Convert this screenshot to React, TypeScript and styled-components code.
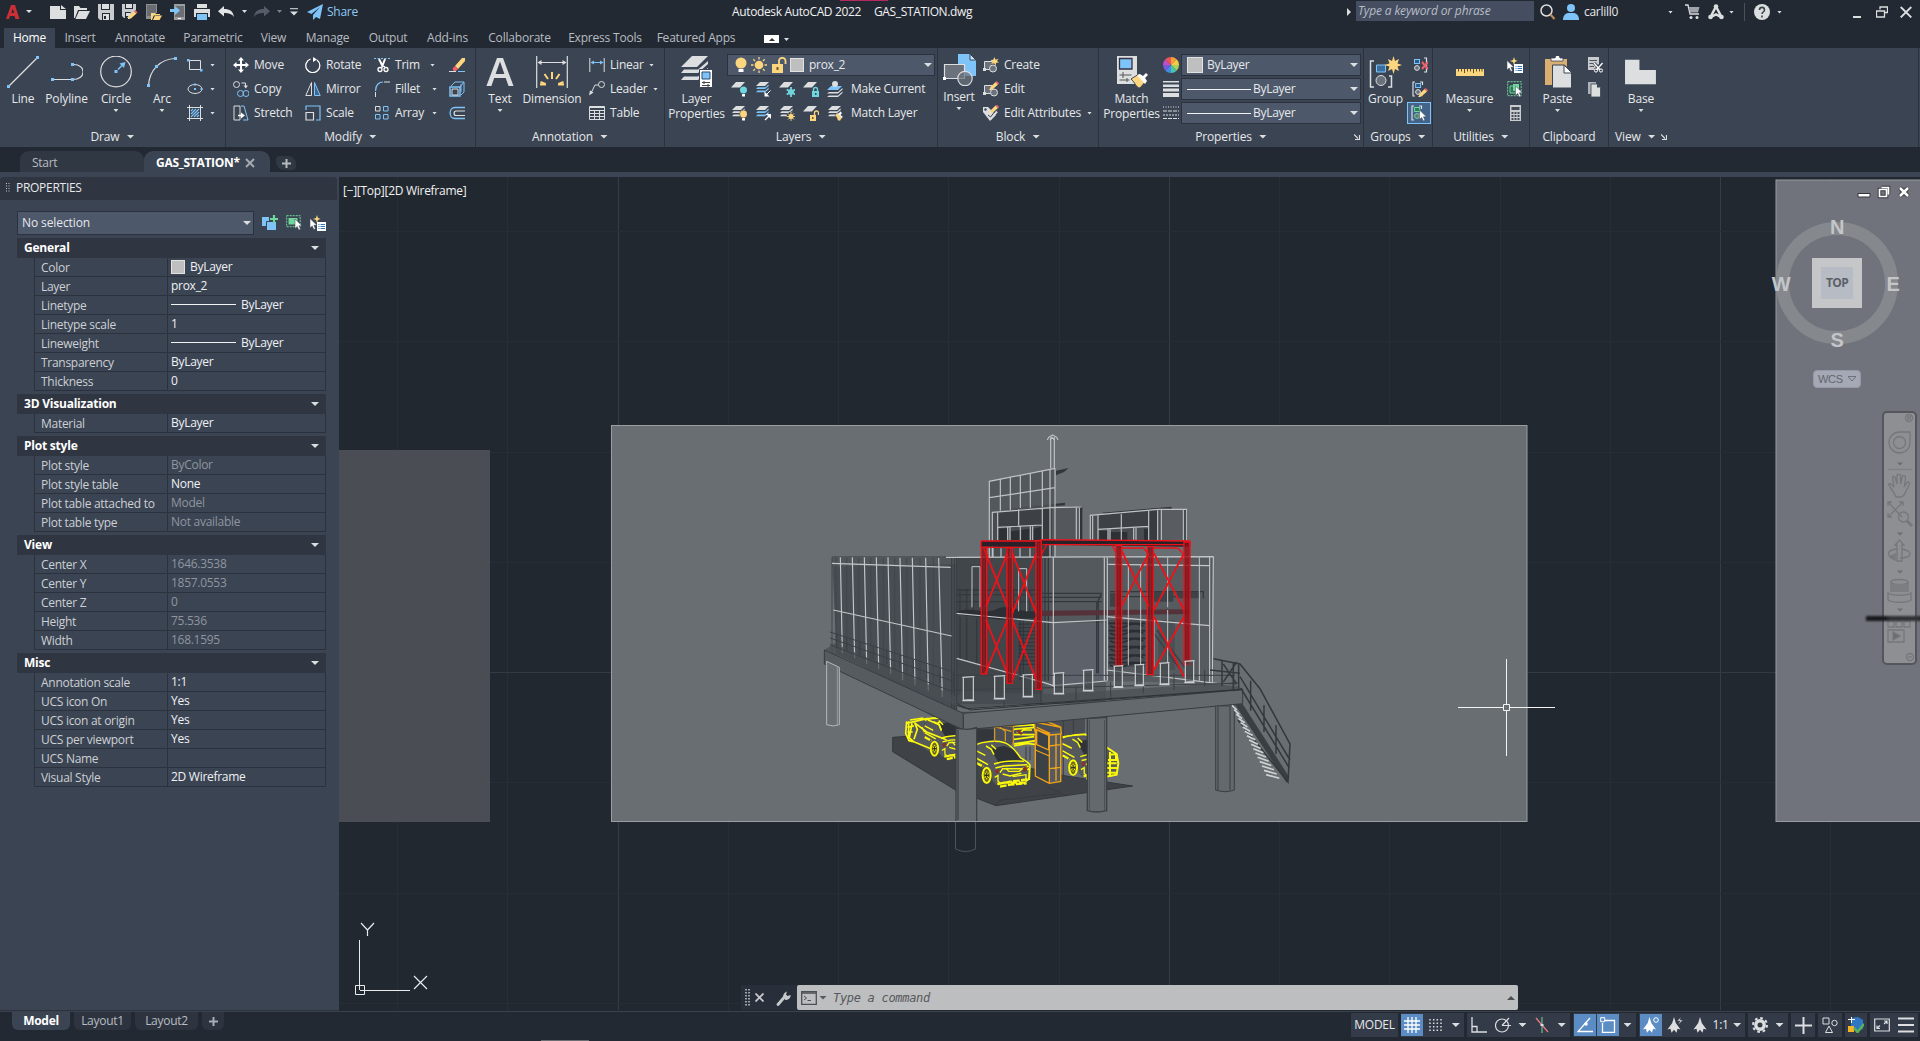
import React from "react";
import styled, { createGlobalStyle, css } from "styled-components";

const c = {
  chrome: "#222933",
  panel: "#3b4453",
  header: "#2f3541",
  edge: "#2b323e",
  field: "#4d586b",
  text: "#e6e8ea",
  dim: "#b9bcc1",
  canvas: "#212830",
  w: "#dcdee0",
  b: "#7fc4f8",
  y: "#fcd57f",
  g: "#6fd79b",
  r: "#f0606a",
  t: "#6fd6e0",
};

const Global = createGlobalStyle`
  * { box-sizing: border-box; }
  html, body { margin: 0; padding: 0; background: ${c.chrome}; overflow: hidden; }
  body { font-family: "Open Sans", "Noto Sans", sans-serif; font-size: 12px; font-stretch: 88%; letter-spacing: -.28px; color: ${c.text}; line-height: 16px; white-space: nowrap; }
  svg { display: block; flex: none; }
`;

/* ---------- shared parts ---------- */
const Svg = ({ s = 16, v = s, children, w, h }: { s?: number; v?: number; w?: number; h?: number; children?: React.ReactNode }) => (
  <svg width={w ?? s} height={h ?? s} viewBox={`0 0 ${w ?? v} ${h ?? v}`} fill="none" stroke="none">{children}</svg>
);

const Caret = styled.i<{ $s?: number; $c?: string }>`
  flex: none;
  display: block;
  width: ${p => (p.$s ?? 3) * 2}px;
  height: ${p => Math.ceil(p.$s ?? 3)}px;
  background: ${p => p.$c ?? c.w};
  clip-path: polygon(0 0, 100% 0, 50% 100%);
`;

/* ---------- icons ---------- */
const Layers3 = ({ blue = false }: { blue?: boolean }) => (
  <g fill={c.w}>
    <path d="M5 1h9l-4 4H1z" />
    <path d="M1 8l1.600-1.700h8l3-3v2L10 8z" fill={blue ? c.b : c.w} />
    <path d="M1 11.300l1.600-1.700h8l3-3v2L10 11.300z" fill={blue ? c.b : c.w} />
  </g>
);
const Sheet = () => <path d="M5 1h9l-5 5.500H0z" fill={c.w} />;
const BracketBox = ({ f = "#2f5b86", s = c.b }: { f?: string; s?: string }) => (
  <g>
    <path d="M3 1H1v14h2" stroke={c.w} strokeWidth="1.200" />
    <rect x="3.600" y="2.500" width="5" height="4" fill={f} stroke={s} />
    <circle cx="6" cy="11" r="2.400" fill="#6c727c" stroke={s === c.b ? c.w : s} />
  </g>
);
const Pencil = ({ x = 0, y = 0 }: { x?: number; y?: number }) => (
  <g transform={`translate(${x} ${y})`}>
    <path d="M0 9l1-3 5-5 2.500 2.500-5.500 5z" fill={c.y} />
    <path d="M6 1l1.200-1 2.400 2.300L8.500 3.500z" fill={c.r} />
    <path d="M0 9l.5-1.500 1 1z" fill="#fff" />
  </g>
);
const Pointer = ({ x = 0, y = 0 }: { x?: number; y?: number }) => (
  <path transform={`translate(${x} ${y})`} d="M0 0v9.500l2.200-2 1.600 3.500 1.700-.8-1.600-3.400H7z" fill="#fff" stroke="#39424f" strokeWidth=".5" />
);
const Dot = ({ p }: { p: number[][] }) => <>{p.map(([x, y], i) => <rect key={i} x={x - 1.5} y={y - 1.5} width="3" height="3" fill={c.b} />)}</>;

const icon: Record<string, React.ReactNode> = {
  newFile: <path d="M0 2h10v4h6v9H0zM11 1l5 4h-5z" fill={c.w} />,
  open: <path d="M0 2h5l1.500 2H13v2H4L1 14H0zM5 7h11l-4 8H1.500z" fill={c.w} />,
  save: <><path d="M0 0h16v16H2l-2-2z" fill="#c9cbce" /><path d="M3 0h9v6H3zM4 9h8v7H4z" fill={c.chrome} /><path d="M4 0h7v5H4zM5 10h6v6H5z" fill={c.w} /><path d="M6 12h2v3H6z" fill={c.chrome} /></>,
  saveAs: <><path d="M0 0h14v6l-7 8H2l-2-2z" fill="#c9cbce" /><path d="M3 0h8v5H3zM3 8h6l-4 6H3z" fill={c.chrome} /><path d="M4 0h6v4H4zM4 9h4v3H4z" fill={c.w} /><Pencil x={6} y={6} /></>,
  openWeb: <><path d="M0 0h11v9H6v6H0z" fill="#8d8f93" /><path d="M1 1h9v11H1z" fill="#696c71" /><path d="M5 9h4l1 1h4v1H8l-2 5H5zM9 11.500h7L13.500 16H7z" fill={c.y} /></>,
  saveWeb: <><path d="M4 0h11v16H4z" fill="#9b9da1" /><path d="M5 2h9v11H5z" fill="#6b6e73" /><path d="M0 5h5V2l5 4.500L5 11V8H0z" fill={c.b} /><path d="M8 14h3v1H8z" fill="#fff" /></>,
  print: <><path d="M3 0h10v4H3zM0 5h16v8h-2V9H2v4H0z" fill={c.w} /><path d="M3 10h10v6H3z" fill={c.b} /></>,
  undo: <path d="M6 2v3c6 0 9 2 10 8-2-3-5-4-10-4v3.500L0 7.200z" fill="#e3e4e6" />,
  redo: <path d="M10 2v3C4 5 1 7 0 13c2-3 5-4 10-4v3.500l6-5.300z" fill="#565d68" />,
  share: <path d="M16 0L0 8l4.500 2L13 3 6 11v5l3-3 4 2z" fill={c.b} />,
  rect: <><path d="M2.500 3.500h11v9h-11z" stroke={c.w} /><rect x="0" y="2" width="2.500" height="2.500" fill={c.b} /><rect x="13" y="12" width="2.500" height="2.500" fill={c.b} /></>,
  ellipse: <><ellipse cx="8" cy="8" rx="7" ry="4.500" stroke={c.w} /><rect x="7" y="7" width="2" height="2" fill={c.b} /><rect x="7" y="2.500" width="2" height="2" fill={c.b} /><rect x="13.500" y="7" width="2" height="2" fill={c.b} /></>,
  hatch: <><path d="M0 2.500h16M0 13.500h16M2.500 0v16M13.500 0v16" stroke={c.w} /><path d="M4 6l2-2M4 9l5-5M4 12l8-8M7 12l5-5M10 12l2-2" stroke={c.b} strokeWidth="1.200" /></>,
  move: <path d="M8 0l3 3.500H9V7h3.500V5L16 8l-3.500 3V9H9v3.500h2L8 16l-3-3.500h2V9H3.500v2L0 8l3.500-3v2H7V3.500H5z" fill="#fff" />,
  rotate: <><path d="M5.500 2A7 7 0 1 0 12 3" stroke="#fff" strokeWidth="1.300" /><path d="M8 5V0l4 2.500z" fill="#fff" /></>,
  trim: <><path d="M0 1.500h16" stroke={c.b} strokeDasharray="2 1.500" /><path d="M5 2l4 8M11 2L8 10" stroke="#fff" strokeWidth="2" /><circle cx="6" cy="12.500" r="2" stroke="#fff" strokeWidth="1.300" /><circle cx="12" cy="12.500" r="2" stroke="#fff" strokeWidth="1.300" /><path d="M7 11l3-2 2 2" stroke="#fff" /></>,
  erase: <><path d="M6 9l7-8 3 0v3l-7 8z" fill={c.y} /><path d="M6 9l3 3-2 2c-2 1-4-1-3-3z" fill={c.r} /><path d="M0 14.500h7" stroke={c.w} /><path d="M9 14.500h7" stroke={c.b} /></>,
  copy: <><circle cx="3.500" cy="3.500" r="3" stroke={c.w} /><circle cx="7.500" cy="12.500" r="3" stroke={c.b} /><circle cx="13" cy="12.500" r="3" stroke={c.b} /><path d="M8.500 2h4v3" stroke={c.w} /><path d="M10.500 4.500h4.500l-2.200 3z" fill={c.w} /></>,
  mirror: <><path d="M6.500 1.500v13H.8z" stroke={c.w} /><path d="M9.500 1.500v13h5.700z" stroke={c.b} fill="#3f688f" /></>,
  fillet: <><path d="M1.500 10C1.500 4 5 1 9 1" stroke={c.b} strokeWidth="1.200" /><path d="M10 1h6M1.500 11v5" stroke={c.w} /></>,
  explode: <><path d="M1 6h10v9H1z" stroke={c.b} strokeWidth="1.500" /><path d="M3 8h6v6H3z" stroke={c.w} /><path d="M2 5l4-4h9v10l-3 3M11 6l4-5M12 3v8" stroke={c.b} /></>,
  stretch: <><path d="M7 1H1v14h6z" stroke={c.w} /><path d="M8 1h3l4 14h-5" stroke={c.b} /><path d="M5 10.500h4" stroke="#fff" strokeWidth="1.400" /><path d="M8 7.500l4 3-4 3z" fill="#fff" /></>,
  scale: <><path d="M1 5V1h14v14h-4" stroke={c.b} strokeWidth="1.200" /><path d="M1 7.500h7.500V15H1z" stroke={c.w} strokeWidth="1.200" /></>,
  array: <><path d="M1.500 1.500h4.500v4.500H1.500z" stroke={c.w} /><path d="M9.500 1.500H14v4.500H9.500zM1.500 9.500H6V14H1.500zM9.500 9.500H14V14H9.500z" stroke={c.b} /></>,
  offset: <><path d="M16 2.500H6c-6.500 0-6.500 11 0 11h10" stroke={c.b} strokeWidth="1.300" /><path d="M16 6H7c-2.500 0-2.500 4.500 0 4.500h9" stroke={c.w} strokeWidth="1.200" /></>,
  linear: <><path d="M.8 1v14M15.200 1v14" stroke={c.w} /><path d="M2 5.500h12" stroke={c.b} /><path d="M1.500 5.500L5 3.500v4zM14.500 5.500L11 3.500v4z" fill={c.b} /></>,
  leader: <><circle cx="12.500" cy="3.500" r="3" stroke={c.w} /><path d="M9.500 4H6L2 12" stroke={c.w} /><path d="M0 14.500l1-5 3.500 2z" fill={c.w} /></>,
  table: <path d="M.5 1.500h15v13H.5zM.5 2.500h15M.5 5.500h15M.5 8.500h15M.5 11.500h15M5.500 5v9M10.500 5v9" stroke={c.w} />,
  bulb: <><circle cx="8" cy="6" r="5.500" fill={c.y} /><path d="M5.500 12h5v3h-5z" fill="#fff" /></>,
  sun: <><circle cx="8" cy="8" r="4.300" fill={c.y} /><path d="M8 0v2.500M8 13.500V16M0 8h2.500M13.500 8H16M2.300 2.300l1.800 1.800M11.900 11.900l1.800 1.800M13.700 2.300l-1.800 1.800M4.100 11.900l-1.800 1.800" stroke={c.y} strokeWidth="1.300" /></>,
  unlock: <><path d="M1 7h11v9H1z" fill={c.y} /><path d="M8 8V4a3 3 0 0 1 6.500 0v3" stroke={c.y} strokeWidth="1.800" /><path d="M5.500 10h2v3h-2z" fill="#6d5a2c" /></>,
  layOff: <><Sheet /><circle cx="12.500" cy="9" r="3.500" fill={c.t} /><path d="M11 13h3v2.500h-3z" fill="#fff" /></>,
  layIso: <><Layers3 blue /><path d="M15.500 9.500l-4 4" stroke="#fff" /><path d="M9.500 15.500v-5l5 5z" fill="#fff" /></>,
  layFrz: <><Sheet /><path d="M12 6v10M7.700 8.500l8.600 5M16.300 8.500l-8.600 5" stroke={c.t} strokeWidth="1.800" /><circle cx="12" cy="11" r="2.600" stroke={c.t} /></>,
  layLock: <><Sheet /><path d="M9 10h7v6H9z" fill={c.t} /><path d="M10.500 10V8.500a2 2 0 0 1 4 0V10" stroke={c.t} strokeWidth="1.400" /><path d="M12 12h1.500v2H12z" fill="#2d5560" /></>,
  layOn: <><Layers3 /><circle cx="12.500" cy="9" r="4" fill={c.y} stroke={c.panel} strokeWidth=".6" /><path d="M11 13h3v2.500h-3z" fill="#fff" /></>,
  layUniso: <><Layers3 blue /><path d="M10 15l4-4" stroke="#fff" strokeWidth="1.300" /><path d="M11 9h5v5z" fill="#fff" /></>,
  layThaw: <><Layers3 /><circle cx="12" cy="11.500" r="4.500" fill={c.panel} /><circle cx="12" cy="11.500" r="2.500" fill={c.y} /><path d="M12 7v9M7.500 11.500h9M9 8.500l6 6M15 8.500l-6 6" stroke={c.y} strokeWidth=".9" /></>,
  layUnlock: <><Sheet /><path d="M7 10h6v6H7z" fill={c.y} /><path d="M11.500 10V8a2 2 0 0 1 4 0v2" stroke={c.y} strokeWidth="1.300" /><path d="M9 12h1.500v2H9z" fill="#6d5a2c" /></>,
  makeCur: <><path d="M4 5h11l-4 4H0z" fill={c.b} /><circle cx="8" cy="3" r="3" fill={c.w} /><path d="M0 12.500L2 11h9l4.500-4v1.500L11 12.500zM0 16l2-1.500h9l4.500-4V12L11 16z" fill={c.w} /></>,
  matchLay: <><Layers3 /><path d="M8 10l2-2 5 5-2 3c-2 0-3-1-3-3z" fill={c.y} stroke={c.panel} strokeWidth=".5" /><path d="M10 8l2 .5 1.500-2L15 8l-1.500 2L16 12l-1.500 1z" fill="#fff" /></>,
  create: <><path d="M9.500 4.500h-8v8h6" stroke={c.w} fill="#6c727c" /><rect x="0" y="11" width="3" height="3" fill={c.w} /><circle cx="10" cy="11.500" r="3.500" fill="#6c727c" stroke={c.w} /><path d="M11.500 0l1 2.700L15.500 1.700 14 4l2 1.500-2.800.3-.7 2.900-1.300-2.400L8.300 7 9.500 4.700 7.500 3l2.700-.2z" fill={c.y} /></>,
  edit: <><path d="M9.500 4.500h-8v8h6" stroke={c.w} fill="#6c727c" /><rect x="0" y="11" width="3" height="3" fill={c.w} /><circle cx="11" cy="11.500" r="3.500" fill="#6c727c" stroke={c.w} /><Pencil x={6.5} y={0} /></>,
  editAttr: <><path d="M0 2h5l8 8-6 6-7-9z" fill={c.w} /><circle cx="2.500" cy="4.500" r="1.200" fill={c.panel} /><path d="M6 12l2 1.500 6-7" stroke={c.w} strokeWidth="2" /><path d="M5 10l2.500 2 4-5" stroke={c.panel} strokeWidth="1" /><Pencil x={6.5} y={-.5} /></>,
  wheel: <g>{["#f6a03a", "#f7cb45", "#a4d35c", "#4ec3a5", "#3f8de8", "#7a57dd", "#c14fc4", "#ef5458"].map((f, i) => {
    const a = (i * 45 - 90) * Math.PI / 180, b = a + Math.PI / 4;
    return <path key={i} fill={f} d={`M8 8L${8 + 8 * Math.cos(a)} ${8 + 8 * Math.sin(a)}A8 8 0 0 1 ${8 + 8 * Math.cos(b)} ${8 + 8 * Math.sin(b)}Z`} />;
  })}</g>,
  weight: <path d="M0 0h16v1.500H0zM0 3.500h16v2.500H0zM0 7.500h16v3H0zM0 12h16v4H0z" fill={c.w} />,
  ltype: <><path d="M0 2h16" stroke={c.w} strokeDasharray="1 1.500" /><path d="M0 6h16M0 13.500h16" stroke={c.w} strokeDasharray="4 1" /><path d="M0 10h16" stroke={c.w} strokeDasharray="2 1" /></>,
  ungroup: <><path d="M12 1h2.500v14H12" stroke={c.w} strokeWidth="1.200" /><rect x="2.500" y="2.500" width="5" height="4" fill="#2f5b86" stroke={c.b} /><circle cx="5" cy="11" r="2.400" fill="#6c727c" stroke={c.w} /><path d="M10 5l6 7M16 5l-6 7" stroke={c.r} strokeWidth="2" /></>,
  groupEdit: <><BracketBox /><path d="M8 1h2.500v3" stroke={c.w} strokeWidth="1.200" /><Pencil x={6.5} y={7} /></>,
  groupSel: <><BracketBox f="#2d7a5f" s={c.g} /><path d="M8 1h2.500v3" stroke={c.w} strokeWidth="1.200" /><Pointer x={8.5} y={5} /></>,
  quick: <><Pointer x={0} y={3.5} /><path d="M7 0l1 3 2.500.8L8 5 7 8 6 5 3 4l3-1z" fill={c.y} /><path d="M7 7h9v9H7z" fill="#fff" /><path d="M8.500 9.500h1M8.500 11.500h1M8.500 13.500h1M10.500 9.500H15M10.500 11.500H15M10.500 13.500H15" stroke="#3677b5" /></>,
  selAll: <><path d="M.7.700h13.500v14H.700z" stroke={c.g} strokeDasharray="2 1" /><path d="M3 5h6v7H3z" fill="#2e7355" stroke={c.g} /><path d="M6 3h6v7H6z" fill={c.g} /><Pointer x={8.5} y={5} /></>,
  selObj: <><path d="M.7.700h13.500v11H.700z" stroke={c.g} strokeDasharray="2 1" /><path d="M2.500 3h9v6.500h-9z" fill={c.g} /><Pointer x={9} y={4} /></>,
  pickAdd: <><path d="M0 2h7v9H0zM5 7h9v8H5z" fill={c.b} /><path d="M4.500 11V6.500h6" stroke={c.panel} /><path d="M12 0v8M8 4h8" stroke={c.g} strokeWidth="2.200" /></>,
  calc: <><path d="M3 0h11v16H3z" fill="#c9cbce" /><path d="M4.500 2h8v3h-8z" fill="#444c59" /><path d="M4.500 7h2v2h-2zM7.500 7h2v2h-2zM10.500 7h2v2h-2zM4.500 10h2v2h-2zM7.500 10h2v2h-2zM10.500 10h2v2h-2zM4.500 13h2v2h-2zM7.500 13h2v2h-2zM10.500 13h2v2h-2z" fill="#444c59" /></>,
  cut: <><path d="M1 0h11v13H1z" fill="#c9cbce" /><path d="M2.500 3.500H10M2.500 6.500H7M2.500 9.500H7" stroke="#4c5461" strokeWidth="1.200" /><path d="M7 6l7 7M15 6l-7 7" stroke="#39424f" strokeWidth="3" /><path d="M7 6l6 7M15.500 6l-6 7" stroke="#fff" strokeWidth="1.300" /><circle cx="9" cy="13.500" r="1.600" stroke="#fff" /><circle cx="14" cy="13.500" r="1.600" stroke="#fff" /></>,
  copyClip: <><path d="M1 1h8v12H1z" fill="#aeb1b5" /><path d="M4 3h6l3.500 3.500V16H4z" fill={c.w} stroke={c.panel} strokeWidth=".8" /><path d="M10 3v3.500h3.500z" fill={c.panel} /></>,
};

const big: Record<string, React.ReactNode> = {
  line: <><path d="M1.500 30.500L30 2" stroke={c.w} strokeWidth="1.200" /><Dot p={[[1.5, 30.5], [30.5, 1.5]]} /></>,
  polyline: <><path d="M1.500 23.500h20M21.500 23.500c14 0 14-15 1-15" stroke={c.w} strokeWidth="1.200" /><Dot p={[[1.5, 23.5], [21.5, 23.5], [21.5, 8.5]]} /></>,
  circle: <><circle cx="16" cy="15.500" r="15.300" stroke={c.w} strokeWidth="1.200" /><path d="M18 13.500l4-4" stroke={c.b} strokeWidth="1.500" /><path d="M25.500 6l-1.500 6-4.500-4.500z" fill={c.b} /><Dot p={[[16, 15.5]]} /></>,
  arc: <><path d="M2.500 29.500C3.500 14 14 3 29.500 2.500" stroke={c.w} strokeWidth="1.200" /><Dot p={[[2.5, 29.5], [10.5, 10.5], [29.5, 2.5]]} /></>,
  text: <path fillRule="evenodd" d="M13 2h6l10.500 28h-5l-2.800-8H10.200l-2.800 8h-5zM11.600 18h8.800L16 5.500z" fill={c.w} />,
  dimension: <><path d="M.7 0v32M31.300 0v32M2 6.500h28" stroke={c.w} strokeWidth="1.200" /><path d="M1.500 6.500l4-2.500v5zM30.500 6.500l-4-2.500v5z" fill={c.w} /><path d="M16 16v7M8.500 18l3.500 5M23.500 18L20 23M4.500 26l5 2M27.500 26l-5 2M4 28.500h6M28 28.500h-6" stroke={c.y} strokeWidth="2" /></>,
  layerProps: <><path d="M12 0h16L17 11H1z" fill={c.w} /><path d="M1 17l3-3.500h14L28 5v3l-10 9zM1 24l3-3.500h14L28 12v3l-10 9z" fill={c.w} /><path d="M19.500 13.500h13v18h-13z" fill="#fff" stroke={c.panel} /><path d="M22 16h8v7h-8z" fill={c.b} stroke="#2e4d6d" /><path d="M22 26.500h8M22 29.500h8M24 25v3M28 28v3" stroke="#444" /></>,
  insert: <><path d="M15 0h12l6 6v16H15z" fill={c.b} /><path d="M27 0v6h6z" fill="#c9e6fb" stroke={c.panel} /><path d="M1.500 10.500h20v14h-20z" fill="#6c727c" stroke={c.w} strokeWidth="1.200" /><rect x="0" y="23" width="3" height="3" fill="#fff" /><circle cx="22" cy="24.500" r="7.200" fill="#6c727cbb" stroke={c.w} strokeWidth="1.200" /></>,
  match: <><path d="M1 0h20v28H1z" fill={c.w} /><path d="M3.500 2.500h12.500v10.500H3.500z" fill={c.b} stroke="#334" strokeWidth="1.300" /><path d="M3.500 19h12M3.500 24h10M7 16v6M11 22v4" stroke="#555" /><path d="M15 23l8-5 7 7-6 7c-4 0-5-6-9-9z" fill={c.y} stroke={c.panel} /><path d="M21 19l3-1 3 2 3-3 2 2-3 3 2 3-2 3z" fill="#fff" /></>,
  group: <><path d="M5 5H1.500v26H5M20 20h2.500v11H19" stroke={c.w} strokeWidth="1.500" /><path d="M7.500 9h9v7h-9z" fill="#3d6d9e" stroke={c.b} /><circle cx="12" cy="24.500" r="5" fill="#6c727c" stroke={c.w} /><path d="M24.500 0l1.500 5 4-2-1.500 4.500L33 9l-4.500 1.500L30 15l-4-2-1.500 5L23 13l-4 2 1.500-4.500L15 9l5.500-1.500L19 3l4 2z" fill={c.y} /></>,
  measure: <><path d="M2 13h28v7H2z" fill={c.y} /><path d="M4.500 13v2.500M7.500 13v2.500M10.500 13v4M13.500 13v2.500M16.500 13v2.500M19.500 13v4M22.500 13v2.500M25.500 13v2.500M28 13v2.500" stroke="#5a4d2c" /></>,
  paste: <><path d="M3 3h22v26H3z" fill="#d8ae72" /><path d="M9 5V2h4l1-2.500h3L18 2h3v3z" fill="#fff" stroke={c.panel} strokeWidth=".8" /><path d="M10.500 9h12l7 7v16h-19z" fill={c.w} stroke={c.panel} /><path d="M22 9v8h8z" fill="#fff" stroke={c.panel} /></>,
  base: <path d="M1 4h14v11h16v15H1z" fill={c.w} transform="translate(-1 0) scale(1.030 .94)" />,
};

/* ---------- title bar ---------- */
const Page = styled.div`width: 1920px; height: 1041px; display: flex; flex-direction: column; position: relative; background: ${c.chrome}; overflow: hidden;`;
const TitleBar = styled.header`height: 28px; display: flex; position: relative; padding-left: 6px;`;
const QuickBar = styled.div`height: 23px; display: flex; align-items: center;`;
const Slot = styled.span<{ $w: number }>`flex: none; width: ${p => p.$w}px; display: flex; align-items: center;`;
const ShareText = styled.span`width: 30px; color: #8fc9f3; font-size: 12px;`;
const DocTitle = styled.div`display: flex; gap: 12px; height: 24px; align-items: center; padding-left: 375px; color: #f0f1f2;`;
const TitlePart = styled.span<{ $w: number }>`width: ${p => p.$w}px; letter-spacing: -.36px;`;
const TopMark = styled.i`position: absolute; left: 840px; top: 0; width: 48px; height: 1px; background: #b3295f;`;
const RightTools = styled.div`margin-left: auto; display: flex; align-items: center; height: 24px; padding-right: 8px;`;
const Search = styled.div`width: 178px; height: 20px; margin: 0 6px 3px 5px; padding-left: 2px; background: #454e60; color: #b7bcc6; font-style: italic; line-height: 20px; letter-spacing: -.15px;`;
const RightCaret = styled.i`border: 4px solid transparent; border-left-color: ${c.w}; border-right: 0;`;
const Bar = styled.i`width: 1px; height: 18px; background: #4a515c;`;

/* ---------- ribbon ---------- */
const Tabs = styled.nav`height: 20px; display: flex; padding-left: 4px;`;
const Tab = styled.span<{ $w: number; $on?: boolean }>`
  width: ${p => p.$w}px; height: 20px; text-align: center; line-height: 20px; color: ${c.dim}; letter-spacing: -.2px;
  ${p => p.$on && css`background: ${c.panel}; color: #fff;`}
`;
const MinBtn = styled.span`margin: 7px 5px 0 21px; width: 15px; height: 8px; background: #fff; display: grid; place-items: center; i { transform: rotate(180deg); }`;
const MinDrop = styled.span`padding-top: 10px;`;
const Ribbon = styled.section`height: 99px; display: flex; background: ${c.panel};`;
const Panel = styled.div<{ $w: number }>`width: ${p => p.$w}px; flex: none; display: flex; flex-direction: column; border-right: 1px solid ${c.edge};`;
const Body = styled.div`height: 77px; padding: 5px 0 0 1px; display: flex;`;
const PanelName = styled.div<{ $start?: number }>`
  height: 22px; display: flex; gap: 7px; align-items: center; justify-content: center; position: relative; padding-top: 1px; letter-spacing: -.15px;
  ${p => p.$start !== undefined && css`justify-content: flex-start; padding-left: ${p.$start}px;`}
`;
const Launcher = styled.span<{ $x?: number }>`position: absolute; right: ${p => p.$x ?? 5}px; top: 9px;`;
const BigBtn = styled.button<{ $w: number; $n?: number }>`
  width: ${p => p.$w}px; height: 70px; flex: none; border: 0; background: none; padding: ${p => p.$n ? 1 : 3}px 0 0; color: inherit; font: inherit; font-stretch: inherit; letter-spacing: -.15px;
  display: flex; flex-direction: column; align-items: center; line-height: 15px; white-space: pre; text-align: center;
`;
const BigLabel = styled.span`margin-top: 3px; display: flex; flex-direction: column; align-items: center; gap: 3px;`;
const Col = styled.div<{ $w?: number; $ml?: number }>`display: flex; flex-direction: column; flex: none; width: ${p => p.$w ? p.$w + "px" : "auto"}; margin-left: ${p => p.$ml ?? 0}px;`;
const Row = styled.div<{ $g?: number; $ml?: number }>`height: 24px; display: flex; align-items: center; gap: ${p => p.$g ?? 5}px; padding-left: ${p => p.$ml ?? 0}px;`;
const RowText = styled.span<{ $w?: number }>`width: ${p => p.$w ? p.$w + "px" : "auto"}; letter-spacing: -.2px;`;
const Combo = styled.div<{ $w: number }>`
  width: ${p => p.$w}px; height: 22px; background: ${c.field}; border: 1px solid ${c.edge}; display: flex; align-items: center; padding: 0 2px 0 5px;
  & > i:last-child { margin-left: auto; }
`;
const Swatch = styled.i<{ $s?: number }>`width: ${p => p.$s ?? 16}px; height: ${p => p.$s ?? 16}px; background: #bfbfc0; border: 1px solid #e2e2e2; flex: none;`;
const Rule = styled.i<{ $w: number }>`width: ${p => p.$w}px; height: 1px; background: #f2f2f2; flex: none;`;
const Toggle = styled.span`width: 24px; height: 22px; margin-left: -5px; display: grid; place-items: center; background: #42638a; border: 1px solid ${c.b};`;

const Big = ({ i, label, w, drop, n, h }: { i: string; label: string; w: number; drop?: boolean; n?: number; h?: number }) => (
  <BigBtn $w={w} $n={n}><Svg s={32} w={h ?? 32} h={32}>{big[i]}</Svg><BigLabel>{label}{drop && <Caret $s={2.5} />}</BigLabel></BigBtn>
);
const Ic = ({ n }: { n: string }) => <Svg>{icon[n]}</Svg>;
const Name = ({ children, caret = true, start, launch }: { children: string; caret?: boolean; start?: number; launch?: number }) => (
  <PanelName $start={start}>{children}{caret && <Caret $s={4} />}{launch !== undefined && <Launcher $x={launch}><Svg s={6}><path d="M0 .5L4 4.500M5.500 1v4.500H1" stroke={c.w} strokeWidth="1.200" /></Svg></Launcher>}</PanelName>
);
const Small = ({ i, t, w, drop }: { i: string; t?: string; w?: number; drop?: boolean }) => (
  <Row><Ic n={i} />{t && <RowText $w={w}>{t}</RowText>}{drop && <Caret $s={2.5} />}</Row>
);

const RibbonBar = () => (
  <Ribbon>
    <Panel $w={226}>
      <Body>
        <Big i="line" label="Line" w={44} /><Big i="polyline" label="Polyline" w={43} /><Big i="circle" label="Circle" w={56} drop /><Big i="arc" label="Arc" w={36} drop />
        <Col $ml={7}>{["rect", "ellipse", "hatch"].map(n => <Row key={n} $g={7}><Ic n={n} /><Caret $s={2.5} /></Row>)}</Col>
      </Body>
      <Name>Draw</Name>
    </Panel>
    <Panel $w={250}>
      <Body>
        <Col $w={72} $ml={6}><Small i="move" t="Move" /><Small i="copy" t="Copy" /><Small i="stretch" t="Stretch" /></Col>
        <Col $w={69}><Small i="rotate" t="Rotate" /><Small i="mirror" t="Mirror" /><Small i="scale" t="Scale" /></Col>
        <Col $w={75}><Small i="trim" t="Trim" w={30} drop /><Small i="fillet" t="Fillet" w={32} drop /><Small i="array" t="Array" w={32} drop /></Col>
        <Col><Small i="erase" /><Small i="explode" /><Small i="offset" /></Col>
      </Body>
      <Name>Modify</Name>
    </Panel>
    <Panel $w={189}>
      <Body>
        <Big i="text" label="Text" w={46} drop /><Big i="dimension" label="Dimension" w={58} />
        <Col $ml={8}><Small i="linear" t="Linear" w={34} drop /><Small i="leader" t="Leader" w={38} drop /><Small i="table" t="Table" /></Col>
      </Body>
      <Name>Annotation</Name>
    </Panel>
    <Panel $w={273}>
      <Body>
        <Big i="layerProps" label={"Layer\nProperties"} w={61} h={33} />
        <Col>
          <Row><Combo $w={208}>
            <Slot $w={18}><Ic n="bulb" /></Slot><Slot $w={20}><Ic n="sun" /></Slot><Slot $w={19}><Ic n="unlock" /></Slot><Slot $w={19}><Swatch $s={14} /></Slot>prox_2<Caret $s={4} />
          </Combo></Row>
          <Row $g={8} $ml={4}><Ic n="layOff" /><Ic n="layIso" /><Ic n="layFrz" /><Ic n="layLock" /><Ic n="makeCur" /><RowText>Make Current</RowText></Row>
          <Row $g={8} $ml={4}><Ic n="layOn" /><Ic n="layUniso" /><Ic n="layThaw" /><Ic n="layUnlock" /><Ic n="matchLay" /><RowText>Match Layer</RowText></Row>
        </Col>
      </Body>
      <Name>Layers</Name>
    </Panel>
    <Panel $w={161}>
      <Body>
        <Big i="insert" label="Insert" w={40} drop n={1} h={33} />
        <Col $ml={4}><Small i="create" t="Create" /><Small i="edit" t="Edit" /><Small i="editAttr" t="Edit Attributes" w={78} drop /></Col>
      </Body>
      <Name>Block</Name>
    </Panel>
    <Panel $w={265}>
      <Body>
        <Big i="match" label={"Match\nProperties"} w={63} />
        <Col $w={18}><Row><Ic n="wheel" /></Row><Row><Ic n="weight" /></Row><Row><Ic n="ltype" /></Row></Col>
        <Col>
          <Row><Combo $w={180}><Slot $w={20}><Swatch /></Slot>ByLayer<Caret $s={4} /></Combo></Row>
          <Row><Combo $w={180}><Slot $w={66}><Rule $w={64} /></Slot>ByLayer<Caret $s={4} /></Combo></Row>
          <Row><Combo $w={180}><Slot $w={66}><Rule $w={64} /></Slot>ByLayer<Caret $s={4} /></Combo></Row>
        </Col>
      </Body>
      <Name launch={3}>Properties</Name>
    </Panel>
    <Panel $w={69}>
      <Body>
        <Big i="group" label="Group" w={41} h={33} />
        <Col $ml={6}><Small i="ungroup" /><Small i="groupEdit" /><Row><Toggle><Ic n="groupSel" /></Toggle></Row></Col>
      </Body>
      <Name>Groups</Name>
    </Panel>
    <Panel $w={97}>
      <Body>
        <Big i="measure" label="Measure" w={71} drop />
        <Col $ml={2}><Small i="quick" /><Small i="selAll" /><Small i="calc" /></Col>
      </Body>
      <Name>Utilities</Name>
    </Panel>
    <Panel $w={79}>
      <Body>
        <Big i="paste" label="Paste" w={53} drop />
        <Col $ml={3}><Small i="cut" /><Small i="copyClip" /></Col>
      </Body>
      <Name caret={false}>Clipboard</Name>
    </Panel>
    <Panel $w={310}>
      <Body><Big i="base" label="Base" w={62} drop /></Body>
      <Name start={6} launch={251}>View</Name>
    </Panel>
  </Ribbon>
);

/* ---------- file tabs ---------- */
const FileTabs = styled.div`height: 26px; display: flex; align-items: flex-end; padding-left: 20px; border-bottom: 1px solid ${c.panel};`;
const FileTab = styled.div<{ $w: number; $on?: boolean; $small?: boolean }>`
  width: ${p => p.$w}px; height: ${p => p.$small ? 14 : 21}px; margin-bottom: ${p => p.$small ? 2 : 0}px; margin-left: ${p => p.$small ? 6 : 0}px; display: flex; align-items: center; padding: 2px 12px 0; gap: 8px;
  color: ${p => p.$on ? "#fff" : c.dim}; font-weight: ${p => p.$on ? 700 : 400}; background: ${p => p.$on ? c.panel : "#303844"};
  border-radius: ${p => p.$small ? "4px 8px 4px 8px" : "9px 9px 0 0"};
  ${p => p.$small && css`padding: 0; justify-content: center;`}
`;
const FileName = styled.span<{ $w?: number }>`width: ${p => p.$w ? p.$w + "px" : "auto"};`;

/* ---------- properties palette ---------- */
const Main = styled.main`height: 838px; display: flex; border-top: 4px solid ${c.panel};`;
const Palette = styled.aside`width: 339px; flex: none; background: ${c.panel}; border-bottom: 1px solid #2b323d;`;
const PaletteHead = styled.div`width: 337px; height: 23px; background: ${c.header}; border-radius: 4px 4px 0 0; display: flex; align-items: center; gap: 6px; padding: 0 0 2px 6px; line-height: 20px;`;
const Pick = styled.div`display: flex; align-items: center; height: 24px; margin: 11px 0 3px 17px; gap: 8px;`;
const PickCombo = styled(Combo)`height: 24px; padding-left: 4px; letter-spacing: -.1px;`;
const Section = styled.div`width: 309px; margin: 0 0 3px 17px;`;
const SectionHead = styled.div`height: 20px; background: ${c.header}; display: flex; align-items: center; justify-content: space-between; padding: 0 7px; font-weight: 700; color: #fff; letter-spacing: -.22px;`;
const Prop = styled.div`height: 19px; margin-left: 17px; display: grid; grid-template-columns: 133px 1fr; border: 1px solid ${c.edge}; border-top: 0;`;
const Key = styled.span`padding: 1px 0 0 6px; line-height: 18px; color: #cdd0d4; border-right: 1px solid ${c.edge};`;
const Val = styled.span<{ $off?: boolean; $num?: boolean }>`padding-left: 3px; display: flex; align-items: center; height: 17px; gap: 5px; color: ${p => p.$off ? "#8f959f" : "#f0f1f3"};`;

type P = [string, string, ("sw" | "ln" | "off")?];
const sections: [string, P[]][] = [
  ["General", [["Color", "ByLayer", "sw"], ["Layer", "prox_2"], ["Linetype", "ByLayer", "ln"], ["Linetype scale", "1"], ["Lineweight", "ByLayer", "ln"], ["Transparency", "ByLayer"], ["Thickness", "0"]]],
  ["3D Visualization", [["Material", "ByLayer"]]],
  ["Plot style", [["Plot style", "ByColor", "off"], ["Plot style table", "None"], ["Plot table attached to", "Model", "off"], ["Plot table type", "Not available", "off"]]],
  ["View", [["Center X", "1646.3538", "off"], ["Center Y", "1857.0553", "off"], ["Center Z", "0", "off"], ["Height", "75.536", "off"], ["Width", "168.1595", "off"]]],
  ["Misc", [["Annotation scale", "1:1"], ["UCS icon On", "Yes"], ["UCS icon at origin", "Yes"], ["UCS per viewport", "Yes"], ["UCS Name", ""], ["Visual Style", "2D Wireframe"]]],
];

const PropertiesPalette = () => (
  <Palette>
    <PaletteHead><Svg s={4} w={4} h={10}><path d="M.5 0v10M3 0v10" stroke="#c5c8cc" strokeDasharray="1 1.500" /></Svg>PROPERTIES</PaletteHead>
    <Pick><PickCombo $w={237}>No selection<Caret $s={4} /></PickCombo><Ic n="pickAdd" /><Ic n="selObj" /><Ic n="quick" /></Pick>
    {sections.map(([name, rows]) => (
      <Section key={name}>
        <SectionHead>{name}<Caret $s={4} /></SectionHead>
        {rows.map(([k, v, kind]) => (
          <Prop key={k}><Key>{k}</Key><Val $off={kind === "off"}>{kind === "sw" && <Swatch $s={14} />}{kind === "ln" && <Rule $w={65} />}{v}</Val></Prop>
        ))}
      </Section>
    ))}
  </Palette>
);

/* ---------- drawing canvas ---------- */
const Viewport = styled.section`flex: 1; position: relative; background: ${c.canvas}; overflow: hidden;`;
const Controls = styled.div`position: absolute; left: 4px; top: 6px; color: #f2f2f2;`;
const range = (n: number) => Array.from({ length: n }, (_, i) => i);

const YEL = "#fbf90c";
const Car = ({ t }: { t: string }) => (
  <g transform={t} stroke={YEL} strokeWidth="4.500" fill="none">
    <path d="M0 10C22 0 52-4 72 2c24 6 44 26 62 48l26 18 3 12-5 36-14 6-84 6-10-10-4-22L2 60z" fill="#55595b" stroke="none" />
    <path d="M44 20L84 12l34 12 26 34-74 8z" fill="#2f3337" stroke="none" />
    <path d="M0 8C22-2 60-6 86 2c20 8 36 28 48 46 12 8 24 12 28 22l-2 44M0 26l28 14M0 48l36 20M30 12l16 10 8 16M46 8l14 14" />
    <path d="M54 66c22-8 60-10 90-8M58 78l26-6 70-4M72 92l8-12h60l18-8M80 96l22 6 34-8" />
    <path d="M64 126l44-8 48-6M72 134l30-6 50-4M80 122h70M0 62l22 12" strokeWidth="7" strokeDasharray="20 4" />
    <path d="M56 106l10-6v18l10 8M154 84l6-6-2 34-8 6V98l-40 6M90 78l8 10h32l10-10" strokeWidth="4" />
    <ellipse cx="32" cy="100" rx="12" ry="23" strokeWidth="6" fill="#6b6a20" />
    <path d="M26 92l12 16M38 92l-12 16M32 88v24" strokeWidth="3" />
    <path d="M58 84l10-4v14h-9zM140 78l12-6v14l-10 4z" fill="#8b3026" stroke="none" />
    <path d="M32 92v16M26 100h12" stroke="#24272a" strokeWidth="3" />
  </g>
);

const leftRibs = [[121, 412, 127, 700], [157, 412, 164, 715], [193, 412, 200, 732], [229, 412, 236, 747], [264, 412, 272, 762], [300, 413, 308, 780], [337, 413, 345, 795], [377, 413, 385, 812], [416, 414, 427, 831]];
const posts = [[487, 110, 36, 74], [581, 107, 35, 72], [667, 103, 33, 70], [760, 98, 33, 66], [848, 89, 33, 66], [940, 77, 30, 67], [1003, 73, 30, 66], [1078, 68, 31, 68], [1153, 62, 31, 68]];
const steel = [[544, 382, 16, 380], [621, 384, 16, 406], [708, 362, 16, 446], [948, 376, 17, 362], [1042, 380, 18, 384], [1152, 366, 18, 368]];

const Station = () => (
  <>
    {/* paved base, cars and pumps under the deck */}
    <g transform="translate(800 640) scale(.33333)">
      <path d="M278 292l60-4 180 60 280 60 200 30-410 59-120-46-190-116z" fill="#3f4347" stroke="#34383c" strokeWidth="3" />
      <path d="M588 497l10-16 180-20M740 440l60 28" stroke="#33373b" strokeWidth="2" fill="none" />
      <path d="M375 215h480v90H640l-40 60-90-70z" fill="#4b4f53" />
      <path d="M530 268h50v36h-50zM820 235v60M790 240v180M800 290h60M678 320v40M690 320v40" fill="#33373b" stroke="#3a3e42" strokeWidth="3" />
      <path d="M318 252l32-12 60-4 50 20v90l-70-10-60-40z" fill="#55595b" />
      <path d="M372 250l34-8 20 24-40 10zM414 248l50 6v28l-40-8z" fill="#2f3337" />
      <Car t="translate(374 234) scale(.92)" />
      <path d="M320 244l-3 36 10 22 16 4 50 20M326 244v56M336 250l-8 44 14 12M344 248l8 20-10 30M320 250l60-14 60-2M346 250l34 26 60 24M366 262l8 14M384 240l34 14 6 18M420 244l-10 8M322 262l20-4M322 276h16M330 240l40-6" stroke={YEL} strokeWidth="5" fill="none" />
      <Car t="translate(528 306)" />
      <Car t="translate(788 286) scale(.98 .97)" />
      <path d="M788 290l70-8" stroke={YEL} strokeWidth="4" />
      <g stroke={YEL} strokeWidth="5" fill="none"><path d="M642 258l60-4M642 268l64-6M642 284h62M650 276h14l6-6h26M642 298l60-8M642 312l66-10M642 318l40-8 26 4M700 254l10 30" /><path d="M652 272l14 10" stroke="#8b3026" strokeWidth="8" /></g>
      <path d="M916 320l34 22 5 28-5 34-34 6M928 344l20-2v18h-24M920 370h30M920 384h30M920 398h30M930 336v70" stroke={YEL} strokeWidth="6" fill="#5b5f55" />
      <path d="M584 258h60M584 258v48M600 262l16 12v30M640 250v66M584 260l50 14" stroke="#e19b23" strokeWidth="3.500" fill="none" />
      <path d="M706 262l42 14v154l-42-22z" fill="#3c4145" /><path d="M748 276l36-4v150l-36 8z" fill="#565a5e" />
      <path d="M704 246l78 16 2 20-32 3-48-18zM740 244l44 18M706 266v142l42 22 34-6V280M748 284v146M710 270l36 16v44l-36-16zM748 318l34-4M748 386l34-4M706 330l42 18M768 282v140M710 262l40 18" stroke="#f0a318" strokeWidth="4" fill="none" />
    </g>

    {/* upper volumes */}
    <g transform="translate(800 420) scale(.33333)" fill="none">
      <path d="M615 268l180-20v8l-170 14zM905 278l210-18v8l-200 14zM768 152l38-8-14 12-24 10z" fill="#33373b" />
      <path d="M568 184l197-39v267H568z" fill="#4d5257" opacity=".8" />
      <path d="M577 277l178-14v149H577z" fill="#474c51" />
      <path d="M755 262h82v98h-82z" fill="#54585c" /><path d="M835 260h12v100h-12z" fill="#31353a" />
      <path d="M593 275l134-10v50l-134 8z" fill="#3d4146" /><path d="M727 264h28v148h-28z" fill="#373b40" />
      <path d="M596 326l26-2v38h-26zM632 334l28-4v32h-28zM664 330l24-4v36h-24zM700 326l24-6v40h-24z" fill="#2d3136" />
      <path d="M870 286l205-18h88v92H870z" fill="#474c51" />
      <path d="M895 284l150-12v46l-150 10z" fill="#3d4146" /><path d="M1048 270h26v90h-26z" fill="#383c41" /><path d="M1084 270h64v90h-64z" fill="#595d61" />
      <path d="M898 332h26v28h-26zM932 336h50v24h-50zM1032 326h14v34h-14z" fill="#2d3136" />
      <g stroke="#bfc2c4" strokeWidth="3.500">
        <path d="M568 412V184l197-39M568 233l197-30M601 178v94M631 172v98M661 166v98M691 160v104M727 152v110M750 148v264M765 145v267M752 145V52M763 145V52" />
        <path d="M742 60l4-8 12-7 12 7 4 8M750 60l6-8 8 8" />
        <path d="M577 412V277l178-14 90-2M593 360v-84M656 268v48M593 322l134-7M623 322v38M630 322v38M661 320v40M691 318v42M698 318v42M727 264v96M829 262v98M838 262v98M579 385v27M603 385v27M632 385v27M660 385v27M690 385v27" />
        <path d="M871 360v-74l204-18h85v92M878 286v74M894 284v76M894 328l152-9M924 327v33M930 327v33M964 276v84M1001 321v39M1008 321v39M1046 270v90M1073 268v92M1084 268v92M1150 268v92" />
      </g>
    </g>

    {/* main hall walls */}
    <g transform="translate(800 420) scale(.33333)" fill="none">
      <path d="M96 408h374v470L110 702z" fill="#474d52" />
      <path d="M96 408h374v24l-374 8z" fill="#50565a" />
      <path d="M470 412h292v440H470z" fill="#41464b" />
      <path d="M728 412h190v440H728z" fill="#54595d" />
      <path d="M762 608h156v175l-156 14z" fill="#5d626a" />
      <path d="M918 412h322v380l-322-10z" fill="#565b5f" />
      <path d="M926 600h110v140H926z" fill="#474b50" />
      <path d="M1075 600h50v150h-50z" fill="#4b5055" />
      <path d="M96 412v290M108 412v292M140 415v280M176 415v300M212 415v318M250 415v330M284 415v340M320 415v360M360 415v380M400 415v400" stroke="#41464b" strokeWidth="3" />
      <path d="M455 412v460M463 412v464M470 412v466" stroke="#373c41" strokeWidth="3" />
      <path d="M480 590v130M500 590v130M530 594v140M660 600v180M670 600v180M735 412v370M745 412v370" stroke="#33383d" strokeWidth="4" />
      {range(12).map(i => <path key={i} d={`M655 ${612 + i * 11}h50`} stroke="#2f3338" strokeWidth="3" />)}
      <path d="M470 510h250M470 524h250M470 545h250M480 506v70M500 506v70M520 506v70M640 510v70M660 510v70M690 510v70M725 520h180M725 532h180M725 545h180M905 520l-15 30v210M895 540v220M930 515h280v20M930 530h270" stroke="#34393e" strokeWidth="4" />
      <path d="M930 520h30v40h-30zM1060 515h60v30h-60zM1130 515h70v20h-70z" fill="#3d4247" />
      <path d="M470 575c40-16 90 10 120-8s80 14 120 6v22l-110 4-130-16z" fill="#2c2f34" />
      <path d="M725 572l440-4v14l-440 6z" fill="#55323a" />
      {[610, 632, 655, 680, 705, 728].map(y => <path key={y} d={`M926 ${y}h110M930 ${y + 8}q25 12 50 0t50 0`} stroke="#2a2e33" strokeWidth="5" />)}
      <path d="M1070 630l90 120M1062 640l80 110" stroke="#3a3f44" strokeWidth="4" />
      <g stroke="#c3c6c8" strokeWidth="3.500">
        {leftRibs.map(([a, b, d, e]) => <path key={a} d={`M${a} ${b}L${d} ${e}`} />)}
        <path d="M96 430l356 12M100 570l355 78" />
        <path d="M438 412l803-2M760 412v388M913 412v370M922 412v370M1229 412v378M1240 410l-3 380" />
        <path d="M470 580l290 28 160-8M920 590l309 27M925 433l304 4M470 715l260 72 30 10 160-14M920 750l384 47" />
        <path d="M516 562V440h24v122M656 574V446h24v128M985 436v300M1022 436v300M1103 412v150M1103 570v160M1198 412v370M1062 590v150" strokeWidth="3" />
      </g>
    </g>

    {/* deck slab, railings, columns */}
    <g transform="translate(800 640) scale(.33333)" fill="none">
      <path d="M73 30l30-20 367 160 18-16 272 8 560-36-16 10 24 12-838 57z" fill="#4a4f54" opacity=".75" />
      <path d="M90-24l370 120v60L90 14M90-6l370 130M110-18v40M140-8v40M180 4v40M220 18v40M260 32v40M300 46v40M340 60v40M380 74v40M420 88v40M465 106h840M465 150l840-20M470 106v80M612 150v50M722 146v40M828 140v40M932 125v50M1030 110v50M1122 100v50M1214 90v50" stroke="#3a3f44" strokeWidth="3" />
      <path d="M73 30l417 190v50L73 72z" fill="#565b5f" stroke="#373c41" strokeWidth="3" />
      <path d="M490 220l838-71v42L490 270z" fill="#64696d" stroke="#373c41" strokeWidth="3" />
      <path d="M470 196l30 10 828-58M470 190l40 20 818-62" stroke="#2f3338" strokeWidth="3" />
      <path d="M80 64v190q20 8 38 0V82z" fill="#696e72" stroke="#b5b9bb" strokeWidth="3" /><path d="M112 78v176" stroke="#999d9f" strokeWidth="3" />
      <path d="M468 268h62v278h-62z" fill="#676c70" /><path d="M468 262q30 12 62 0v284M468 262v284M474 270v270" stroke="#3a3f44" strokeWidth="3.500" />
      <path d="M862 236l58-4v280q-30 8-58 0z" fill="#64696d" stroke="#3c4145" strokeWidth="4" /><path d="M868 240v270M914 240v270" stroke="#484d51" strokeWidth="3" />
      <path d="M1247 198h56v252q-28 10-56 0zM1254 200v250M1290 200v250" fill="#64696d" stroke="#3e4347" strokeWidth="3.500" />
      {/* stairs */}
      <path d="M1304 192h24l140 220-8 16z" fill="#3a3f44" />
      <path d="M1240 56l80 16 60 74 90 166-6 114-150-186M1230 90l90 10M1266 62v76M1300 70v84M1316 74v76M1352 122v90M1392 196v80M1428 256v86M1320 110l150 250M1322 144l146 240M1270 72l40 60M1310 66l-40 60" stroke="#33383d" strokeWidth="4.500" />
      {range(17).map(i => <path key={i} d={`M${1296 + i * 6.4} ${196 + i * 13}l${14 + i * 1.6} ${14 - i * .2}`} stroke="#cfd2d3" strokeWidth="5" />)}
    </g>

    {/* red steel frame */}
    <g transform="translate(800 420) scale(.33333)" fill="none" stroke="#ee1218">
      <path d="M543 362h167v18H543zM726 360l440 4v16l-440-6z" fill="#2b2027" stroke="none" />
      {steel.map(([x, y, w, h]) => <g key={x}><path d={`M${x} ${y}h${w}v${h}h-${w}z`} fill="#7a1218" fillOpacity=".75" strokeWidth="4" /><path d={`M${x + w / 2} ${y + 8}v${h - 12}`} strokeWidth="2.500" stroke="#c01217" /></g>)}
      <path d="M543 363h167l20-4 440 4M551 382h157M728 374h424M543 363v20M1170 362v20" strokeWidth="4" />
      <path d="M558 400l64 160M622 400l-64 160M558 600l64 160M622 600l-66 160M637 400l72 180M709 400l-72 180M637 600l72 180M709 590l-72 190M964 390l82 170M1046 400l-82 160M1062 400l90 170M1152 400l-90 170M1062 590l90 180M1152 590l-90 160" strokeWidth="5.500" />
      <path d="M551 382q4 18 14 24M740 376q-10 12-16 30M936 376q10 14 14 28M964 384h66l16 18M1062 384h70l20 18" strokeWidth="4" />
    </g>

    {/* bollards along the deck */}
    <g transform="translate(800 640) scale(.33333)" fill="#454a4f99" stroke="#cdd0d2" strokeWidth="3.500">
      {posts.map(([x, y, w, h]) => <path key={x} d={`M${x} ${y + 2}l${w}-2M${x + 3} ${y}v${h - 4}l${w - 6}-1V${y}M${x} ${y + h - 2}h${w}`} />)}
    </g>
  </>
);

const Canvas = () => (
  <svg width="1581" height="833" viewBox="339 177 1581 833">
    {range(14).map(i => <path key={i} d={`M${Math.round(397 + i * 110.25) + .5} 177V1010`} stroke={i % 5 === 2 ? "#353d4a" : "#272f39"} />)}
    {range(8).map(i => <path key={i} d={`M339 ${Math.round(231 + i * 110.25) + .5}H1920`} stroke={i === 4 ? "#323a45" : "#262d36"} />)}
    <rect x="339" y="450" width="151" height="372" fill="#4a4e54" />
    <rect x="611.5" y="425.500" width="915.500" height="396" fill="#696e72" stroke="#9a9ea2" />
    <rect x="1776" y="180" width="160" height="641.500" fill="#70737b" stroke="#989ca2" />
    <path d="M955.5 822v27q10 5 20 0v-27" stroke="#4d535c" fill="none" />
    <Station />
    <path d="M611 821.500h916" stroke="#9a9ea2" />
    <path d="M1458 707.500h45M1510 707.500h45M1506.500 659v45M1506.500 711v45M1503.500 704.500h6v6h-6z" stroke="#f4f4f4" fill="none" />
    <path d="M359.500 940v50M360 990.500h50M355.500 985.500h9v9h-9z" stroke="#e8eaec" fill="none" />
    <path d="M361 923l6.500 7 6.500-7M367.500 930v6M414 976l13 13M427 976l-13 13" stroke="#e8eaec" fill="none" strokeWidth="1.200" />
  </svg>
);

const Overlay = styled.div`position: absolute; right: 0; top: 0; width: 145px; height: 500px;`;
const WinCtl = styled.div`position: absolute; right: 9px; top: 8px; display: flex; gap: 6px;`;
const Compass = styled.div`position: absolute; right: 22px; top: 45px; width: 122px; height: 122px; border: 13px solid #85888c; border-radius: 50%; display: grid; place-items: center;`;
const Cube = styled.div`width: 50px; height: 50px; background: #c4c6c8; display: grid; place-items: center;`;
const Face = styled.div`width: 32px; height: 32px; background: #b7bbc3; color: #5b6068; font-weight: 700; font-size: 12px; letter-spacing: -.6px; display: grid; place-items: center;`;
const Point = styled.b<{ $x: number; $y: number }>`position: absolute; left: ${p => p.$x - 10}px; top: ${p => p.$y - 10}px; width: 20px; height: 20px; text-align: center; font: 700 20px/20px "Liberation Sans", Arial, sans-serif; color: #c3c6c9;`;
const Wcs = styled.div`position: absolute; right: 59px; top: 193px; width: 48px; height: 18px; border-radius: 4px; background: #a5a8b5; border: 1px solid #9498a8; color: #62656e; font: 11px/16px "Liberation Sans", Arial, sans-serif; display: flex; align-items: center; padding-left: 4px; gap: 5px;`;
const NavBar = styled.div`position: absolute; right: 3px; top: 234px; width: 35px; height: 254px; border-radius: 5px; border: 2px solid #53565c; background: #8d8f93; display: flex; justify-content: center;`;
const Beam = styled.i`position: absolute; right: -4px; top: 439px; width: 58px; height: 5px; background: linear-gradient(90deg, #17191c 35%, #2c2e31 40%, #303236 90%, #17191c); filter: blur(1px);`;

const ViewTools = () => (
  <Overlay>
    <WinCtl>
      <Svg s={14}><path d="M1 8.500h12v3.500H1z" fill="#fff" stroke="#33373d" /></Svg>
      <Svg s={14}><path d="M4.500 2.500h7v7M2.500 4.500h7v7h-7z" stroke="#33373d" strokeWidth="3.500" /><path d="M4.500 2.500h7v7M2.500 4.500h7v7h-7z" stroke="#fff" strokeWidth="1.700" /></Svg>
      <Svg s={14}><path d="M3 3l8 8M11 3l-8 8" stroke="#33373d" strokeWidth="4.500" /><path d="M3 3l8 8M11 3l-8 8" stroke="#fff" strokeWidth="2.500" /></Svg>
    </WinCtl>
    <Compass><Cube><Face>TOP</Face></Cube></Compass>
    <Point $x={62} $y={50}>N</Point><Point $x={62} $y={163}>S</Point><Point $x={6} $y={107}>W</Point><Point $x={118} $y={107}>E</Point>
    <Wcs>WCS<Svg s={8}><path d="M0 1.500h8L4 6z" stroke="#6c7079" /></Svg></Wcs>
    <NavBar>
      <svg width="31" height="250" viewBox="0 0 31 250" fill="none" stroke="#75777b" strokeWidth="1.300">
        <circle cx="25" cy="5" r="3.500" /><path d="M23 3l4 4M27 3l-4 4" />
        <path d="M15.500 19H26v11a10.500 10.500 0 1 1-10.500-11z" /><circle cx="15.500" cy="29.500" r="6" />
        <path d="M13 49.500h6l-3 3zM13 119.500h6l-3 3zM13 157.500h6l-3 3zM13 195.500h6l-3 3z" fill="#6b6d71" stroke="none" /><path d="M4 56.500h24" stroke="#7e8084" />
        <path d="M11 82c-2-5-6-8-6.500-11 2-1 4 1 5.500 3L8.500 64c2-1.500 3 0 3.500 4l1 3V62c2-1.500 3 0 3.500 0v9l2-8c2-1 3 0 3 2l-1 8 3-4c2-.5 2 1 2 2l-4 8c-1 4-3 4-4 5H12z" />
        <path d="M4 89l14 15M19 89L4 104M4 93v-4h4M15 89h4v4M4 100v4h4" /><circle cx="19.500" cy="104" r="5" /><path d="M23 108l5 5" strokeWidth="3" />
        <path d="M13 148v-16h-2l4.500-5 4.500 5h-2v16z" /><path d="M13 136c-11 1-11 8-2 8M18 136c12 2 10 9-2 9M11 141l-5 3 5 3z" />
        <ellipse cx="15.500" cy="169" rx="8.500" ry="2.500" /><path d="M7 169v10M24 169v10M4 180c4 3 19 3 23 0v7c-4 3-19 3-23 0z" /><path d="M7 171h17v8H7z" fill="#7c7e82" stroke="none" />
        <path d="M4 208h6v6H4zM12 208h6v6h-6zM20 208h6v6h-6zM4 217h16v12H4z" /><path d="M9 219l7 4-7 4z" fill="#6b6d71" />
        <circle cx="26" cy="244" r="3.500" /><path d="M24 244h4" />
      </svg>
    </NavBar>
    <Beam />
  </Overlay>
);

/* ---------- command line ---------- */
const CommandLine = styled.div`position: absolute; left: 402px; bottom: 1px; width: 777px; height: 25px; display: flex; align-items: center; background: #292f3a;`;
const CmdTools = styled.div`width: 56px; display: flex; align-items: center; padding: 0 6px 0 4px; justify-content: space-between;`;
const CmdInput = styled.div`flex: 1; height: 25px; background: #bdbebf; border-radius: 2px; display: flex; align-items: center; padding: 0 3px 0 4px; gap: 2px; color: #55585c; font: italic 12px "DejaVu Sans Mono", "Liberation Mono", monospace; & > i:last-child { margin-left: auto; transform: rotate(180deg); }`;
const CmdHint = styled.span`margin-left: 4px; letter-spacing: -.3px;`;

/* ---------- status bar ---------- */
const Status = styled.footer`height: 30px; display: flex; border-top: 1px solid #3b424d; background: ${c.chrome}; position: relative;`;
const LayoutTabs = styled.div`display: flex; padding-left: 12px; gap: 4px;`;
const LayoutTab = styled.span<{ $w: number; $on?: boolean }>`width: ${p => p.$w}px; height: 18px; line-height: 18px; text-align: center; border-radius: 0 0 6px 6px; background: ${p => p.$on ? c.panel : "#2d3440"}; color: ${p => p.$on ? "#fff" : c.dim}; font-weight: ${p => p.$on ? 700 : 400}; display: grid; place-items: center;`;
const StatusTools = styled.div`margin-left: auto; display: flex; gap: 3px; padding: 1px 2px 0 0;`;
const Cluster = styled.div<{ $w: number }>`width: ${p => p.$w}px; height: 24px; background: #333b48; display: flex; align-items: center; justify-content: space-around;`;
const Cell = styled.span<{ $w: number; $on?: boolean }>`width: ${p => p.$w}px; height: 22px; display: grid; place-items: center; flex: none; background: ${p => p.$on ? "#5b8cc4" : "transparent"};`;
const BottomGlow = styled.i`position: absolute; left: 541px; bottom: 0; width: 48px; height: 1px; background: #6a6d72;`;
const Person = "M8 0l1.800 6L14.500 12.500l-3-.8-1 4-2.500-3-2.500 3-1-4-3 .8L6.200 6z";

const StatusBar = () => (
  <Status>
    <LayoutTabs><LayoutTab $w={58} $on>Model</LayoutTab><LayoutTab $w={57}>Layout1</LayoutTab><LayoutTab $w={63}>Layout2</LayoutTab><LayoutTab $w={22}><Svg s={9}><path d="M4.500 0v9M0 4.500h9" stroke="#a9adb3" strokeWidth="2" /></Svg></LayoutTab></LayoutTabs>
    <StatusTools>
      <Cluster $w={47}>MODEL</Cluster>
      <Cluster $w={63}>
        <Cell $w={22} $on><Svg><path d="M4 0v16M8 0v16M12 0v16M0 4h16M0 8h16M0 12h16" stroke="#fff" strokeWidth="1.300" /></Svg></Cell>
        <Cell $w={24}><Svg s={13}><path d="M1 0v14M4.700 0v14M8.300 0v14M12 0v14" stroke={c.w} strokeWidth="1.500" strokeDasharray="1.500 2" /></Svg></Cell>
        <Cell $w={16}><Caret $s={4} /></Cell>
      </Cluster>
      <Cluster $w={103}>
        <Cell $w={24}><Svg><path d="M1 0v15h15M1 9.500h5V15" stroke={c.w} strokeWidth="1.300" /></Svg></Cell>
        <Cell $w={22}><Svg><circle cx="7" cy="8.500" r="6.500" stroke={c.w} strokeWidth="1.200" /><path d="M7 8.500h9M7 8.500L14 1" stroke={c.w} strokeWidth="1.200" /></Svg></Cell>
        <Cell $w={16}><Caret $s={4} /></Cell>
        <Cell $w={22}><Svg><path d="M8 0v16" stroke={c.g} /><path d="M2 1l6 7 6 7" stroke="#e87c84" strokeWidth="1.200" /><path d="M6.500 8h3" stroke={c.w} strokeWidth="2" /></Svg></Cell>
        <Cell $w={16}><Caret $s={4} /></Cell>
      </Cluster>
      <Cluster $w={63}>
        <Cell $w={22} $on><Svg><path d="M16 14.500H1L13 1" stroke="#fff" strokeWidth="1.300" /><circle cx="9" cy="7" r="1.800" fill="#fff" /></Svg></Cell>
        <Cell $w={22} $on><Svg><path d="M5 3.500h9.500v12H2.500V6" stroke="#fff" strokeWidth="1.300" /><path d="M.7.700h4v4h-4z" stroke="#fff" /></Svg></Cell>
        <Cell $w={16}><Caret $s={4} /></Cell>
      </Cluster>
      <Cluster $w={106}>
        <Cell $w={22} $on><Svg><path d={Person} fill="#fff" transform="translate(-1.500)" /><circle cx="13" cy="3" r="2.300" stroke="#fff" /></Svg></Cell>
        <Cell $w={24}><Svg><path d={Person} fill={c.w} transform="translate(-1)" /><path d="M14 0l-4 4h3l-2 4 5-5h-3z" fill={c.w} stroke="#333b48" strokeWidth=".5" /></Svg></Cell>
        <Cell $w={22}><Svg><path d={Person} fill={c.w} /></Svg></Cell>
        <Cell $w={16}>1:1</Cell><Cell $w={14}><Caret $s={4} /></Cell>
      </Cluster>
      <Cluster $w={40}>
        <Cell $w={20}><Svg><circle cx="8" cy="8" r="4.200" stroke={c.w} strokeWidth="3.400" /><circle cx="8" cy="8" r="7" stroke={c.w} strokeWidth="2" strokeDasharray="2.750 2.750" /></Svg></Cell><Cell $w={14}><Caret $s={4} /></Cell>
      </Cluster>
      <Cluster $w={24}><Svg s={17}><path d="M8.500 0v17M0 8.500h17" stroke={c.w} strokeWidth="2" /></Svg></Cluster>
      <Cluster $w={24}><Svg><path d="M1 1h6v6H1zM7 9l3.500 6.500h-7z" stroke={c.w} /><circle cx="12.500" cy="6" r="2.700" stroke={c.w} /></Svg></Cluster>
      <Cluster $w={22}><Svg><path d="M3 1l7-1 5 3v9l-7 2-5-3z" fill="#2f77c4" /><path d="M0 2.500h7M3.500 0v6" stroke="#fff" /><path d="M0 9h6v6H0z" fill="#f5b326" /><path d="M6 11l3.500 4L16 7" stroke="#56b356" strokeWidth="2.500" /></Svg></Cluster>
      <Cluster $w={48}>
        <Svg><path d="M.7 2h14.600v12H.700z" stroke={c.w} strokeWidth="1.200" /><path d="M3 11.500l3-3M10 7l3-3M3 8.500v3h3M10 4h3v3" stroke={c.w} strokeWidth="1.200" /></Svg>
        <Svg><path d="M0 1.500h16M0 8h16M0 14.500h16" stroke={c.w} strokeWidth="2" /></Svg>
      </Cluster>
    </StatusTools>
    <BottomGlow />
  </Status>
);

const tabs: [string, number][] = [["Home", 51], ["Insert", 50], ["Annotate", 70], ["Parametric", 76], ["View", 45], ["Manage", 63], ["Output", 58], ["Add-ins", 61], ["Collaborate", 83], ["Express Tools", 88], ["Featured Apps", 94]];

export default function App() {
  return (
    <Page>
      <Global />
      <TitleBar>
        <TopMark />
        <QuickBar>
          <Slot $w={20}><Svg><path d="M0 15L5 1h4l4.500 14h-4l-1-3H4l-1 3zM5.500 9H8L6.800 4.500z" fillRule="evenodd" fill="#c92f35" /></Svg></Slot>
          <Slot $w={24}><Caret $s={3} /></Slot>
          {["newFile", "open", "save", "saveAs", "openWeb", "saveWeb", "print", "undo"].map(n => <Slot key={n} $w={24}><Ic n={n} /></Slot>)}
          <Slot $w={12}><Caret $s={2.5} /></Slot>
          <Slot $w={23}><Ic n="redo" /></Slot>
          <Slot $w={13}><Caret $s={2.5} $c="#7c828b" /></Slot>
          <Slot $w={17}><Svg s={8}><path d="M0 .7h8" stroke={c.w} /><path d="M0 3.500h8L4 7.500z" fill={c.w} /></Svg></Slot>
          <Slot $w={20}><Ic n="share" /></Slot>
          <ShareText>Share</ShareText>
        </QuickBar>
        <DocTitle><TitlePart $w={130}>Autodesk AutoCAD 2022</TitlePart><TitlePart $w={100}>GAS_STATION.dwg</TitlePart></DocTitle>
        <RightTools>
          <RightCaret /><Search>Type a keyword or phrase</Search>
          <Slot $w={23}><Svg><circle cx="6.500" cy="6.500" r="5.500" stroke={c.w} strokeWidth="1.500" /><path d="M10.500 10.500l4 4.500" stroke="#b98a5a" strokeWidth="2.200" /></Svg></Slot>
          <Slot $w={21}><Svg><circle cx="8" cy="4" r="4" fill={c.b} /><path d="M0 16c0-5 3-6.500 5-7h6c2 .5 5 2 5 7z" fill={c.b} /></Svg></Slot>
          <Slot $w={84}>carlill0</Slot>
          <Slot $w={17}><Caret $s={2.5} /></Slot>
          <Slot $w={23}><Svg><path d="M0 1h3l2 9h9" stroke={c.w} strokeWidth="1.300" /><path d="M4 3h10.500L13 8.500H5z" fill="#9fa3a9" /><circle cx="6" cy="13.500" r="1.500" fill={c.w} /><circle cx="12" cy="13.500" r="1.500" fill={c.w} /></Svg></Slot>
          <Slot $w={21}><Svg><path d="M8 2.500L2.500 13M8 2.500L13.500 13M3 13l5-2.500 5 2.500" stroke={c.w} strokeWidth="2.500" /><circle cx="8" cy="2.500" r="2.300" fill={c.w} /><circle cx="2.500" cy="13" r="2.300" fill={c.w} /><circle cx="13.500" cy="13" r="2.300" fill={c.w} /></Svg></Slot>
          <Slot $w={15}><Caret $s={2.5} /></Slot>
          <Slot $w={10}><Bar /></Slot>
          <Slot $w={23}><Svg><circle cx="8" cy="8" r="8" fill={c.w} /><path d="M5.500 6c0-3.500 5-3.500 5 0 0 2-2.500 2-2.500 4M8 11.500v2" stroke="#3a424e" strokeWidth="1.600" /></Svg></Slot>
          <Slot $w={76}><Caret $s={2.5} /></Slot>
          <Slot $w={23}><Svg s={8} w={8} h={16}><path d="M0 13h8" stroke={c.w} strokeWidth="2" /></Svg></Slot>
          <Slot $w={24}><Svg s={12}><path d="M4 3.500V1h7.500v5.500H9M.5 5h8v6h-8z" stroke={c.w} strokeWidth="1.300" /></Svg></Slot>
          <Svg s={12}><path d="M.7 1l10.600 10.500M11.300 1L.7 11.500" stroke={c.w} strokeWidth="1.800" /></Svg>
        </RightTools>
      </TitleBar>
      <Tabs>{tabs.map(([t, w], i) => <Tab key={t} $w={w} $on={i === 0}>{t}</Tab>)}<MinBtn><Caret $s={3} $c="#333" /></MinBtn><MinDrop><Caret $s={2.5} /></MinDrop></Tabs>
      <RibbonBar />
      <FileTabs>
        <FileTab $w={124}><FileName>Start</FileName></FileTab>
        <FileTab $w={126} $on><FileName $w={81}>GAS_STATION*</FileName><Svg s={10}><path d="M1 1l8 8M9 1L1 9" stroke="#a5a9b0" strokeWidth="2" /></Svg></FileTab>
        <FileTab $w={20} $small><Svg s={9}><path d="M4.500 0v9M0 4.500h9" stroke="#b6b9be" strokeWidth="2" /></Svg></FileTab>
      </FileTabs>
      <Main>
        <PropertiesPalette />
        <Viewport>
          <Canvas />
          <Controls>[−][Top][2D Wireframe]</Controls>
          <ViewTools />
          <CommandLine>
            <CmdTools>
              <Svg w={5} h={18}><path d="M1 0v18M4 0v18" stroke="#c7c9cc" strokeWidth="1.500" strokeDasharray="1.500 1.500" /></Svg>
              <Svg s={9}><path d="M.5.500l8 8M8.500.500l-8 8" stroke="#c7c9cc" strokeWidth="1.800" /></Svg>
              <Svg w={22} h={16}><path d="M9 14.500L15.500 7" stroke="#c7c9cc" strokeWidth="2.800" strokeLinecap="round" /><path d="M14 7c0-3 2-5 4-5.500L17 4.500l1.500 1.500 3-1c.5 3-2.500 5-5 5z" fill="#c7c9cc" /></Svg>
            </CmdTools>
            <CmdInput><Svg w={16} h={14}><path d="M.7.700h14.600v12.600H.700z" stroke="#4c4f53" strokeWidth="1.300" /><path d="M1 2h14" stroke="#4c4f53" strokeWidth="1.500" /><path d="M3 5l2.500 2L3 9M6.500 9.500H10" stroke="#4c4f53" /></Svg><Caret $s={4} $c="#55585c" /><CmdHint>Type a command</CmdHint><Caret $s={4} $c="#4c4f53" /></CmdInput>
          </CommandLine>
        </Viewport>
      </Main>
      <StatusBar />
    </Page>
  );
}
